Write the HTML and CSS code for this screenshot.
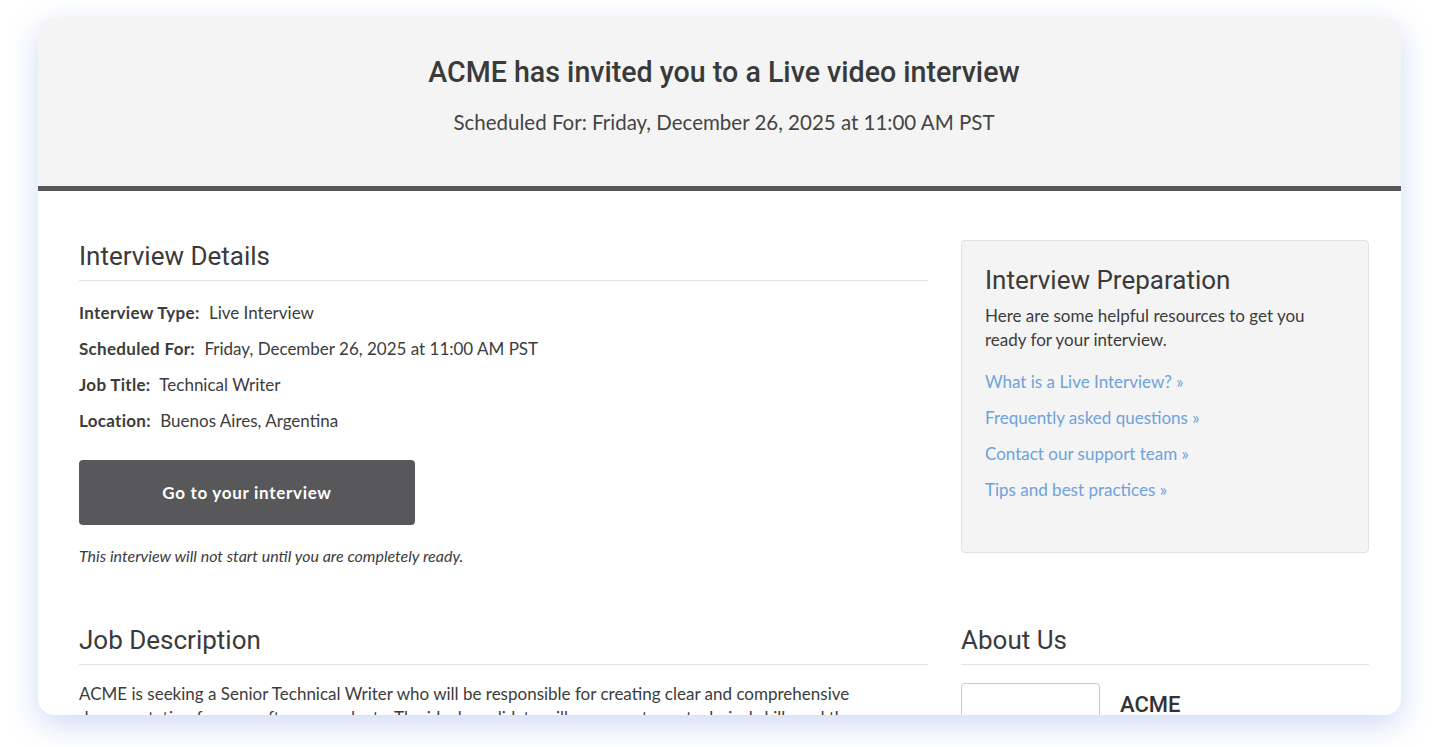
FILE: index.html
```html
<!DOCTYPE html>
<html lang="en">
<head>
    <meta charset="UTF-8">
    <meta name="viewport" content="width=device-width, initial-scale=1.0">
    <title>Interview Invitation</title>
    <link rel="stylesheet" href="styles.css">
</head>
<body>
    <div class="card">
        <!-- Invitation header -->
        <header class="invite-head">
            <h1>ACME has invited you to a Live video interview</h1>
            <p class="invite-date">Scheduled For: Friday, December 26, 2025 at 11:00 AM PST</p>
        </header>

        <div class="content">
            <!-- Interview details -->
            <section class="details">
                <h2 class="section-title">Interview Details</h2>
                <ul class="detail-list">
                    <li><b>Interview Type:</b> Live Interview</li>
                    <li><b>Scheduled For:</b> Friday, December 26, 2025 at 11:00 AM PST</li>
                    <li><b>Job Title:</b> Technical Writer</li>
                    <li><b>Location:</b> Buenos Aires, Argentina</li>
                </ul>
                <a class="go-btn" href="#">Go to your interview</a>
                <p class="note">This interview will not start until you are completely ready.</p>
            </section>

            <!-- Preparation box -->
            <aside class="prep">
                <h3>Interview Preparation</h3>
                <p>Here are some helpful resources to get you ready for your interview.</p>
                <ul class="prep-links">
                    <li><a href="#">What is a Live Interview? &raquo;</a></li>
                    <li><a href="#">Frequently asked questions &raquo;</a></li>
                    <li><a href="#">Contact our support team &raquo;</a></li>
                    <li><a href="#">Tips and best practices &raquo;</a></li>
                </ul>
            </aside>

            <!-- Job description -->
            <section class="job">
                <h2 class="section-title">Job Description</h2>
                <p>ACME is seeking a Senior Technical Writer who will be responsible for creating clear and comprehensive documentation for our software products. The ideal candidate will possess strong technical skills and the ability to explain complex ideas simply.</p>
            </section>

            <!-- Company -->
            <section class="about">
                <h2 class="section-title">About Us</h2>
                <div class="company">
                    <div class="logo-box"></div>
                    <div class="company-name">ACME</div>
                </div>
            </section>
        </div>
    </div>
</body>
</html>
```

FILE: styles.css
```css
* {
    box-sizing: border-box;
}
html, body {
    height: 100%;
}
body {
    margin: 0;
    padding: 17px 38px 32px;
    background: #fff;
    font-family: "Lato", "Liberation Sans", sans-serif;
    font-size: 17px;
    color: #3c3c3c;
}
.card {
    height: 698px;
    overflow: hidden;
    background: #fff;
    border-radius: 16px;
    box-shadow: 0 10px 30px rgba(90, 125, 220, 0.28);
}

/* header */
.invite-head {
    background: #f4f4f4;
    border-bottom: 5px solid #58585a;
    text-align: center;
    padding: 38px 32px 50px 41px;
}
.invite-head h1 {
    margin: 0;
    font-family: Roboto, sans-serif;
    font-weight: 500;
    font-size: 28.6px;
    line-height: 34px;
    color: #3a3a3a;
}
.invite-date {
    margin: 19px 0 0;
    font-size: 20.5px;
    line-height: 28px;
    color: #444;
}

/* two column body */
.content {
    display: grid;
    grid-template-columns: 849px 408px;
    column-gap: 33px;
    padding: 49px 32px 0 41px;
}
.section-title {
    margin: 0;
    padding-bottom: 8px;
    border-bottom: 1px solid #e3e3e3;
    font-family: Roboto, sans-serif;
    font-weight: 400;
    font-size: 26px;
    line-height: 32px;
    color: #3a3a3a;
}
.detail-list {
    list-style: none;
    margin: 14px 0 0;
    padding: 0;
}
.detail-list li {
    line-height: 36px;
}
.detail-list b {
    font-weight: 700;
    letter-spacing: 0.3px;
    margin-right: 5px;
}
.go-btn {
    display: flex;
    align-items: center;
    justify-content: center;
    width: 336px;
    height: 65px;
    margin-top: 21px;
    background: #58585a;
    border-radius: 4px;
    color: #fff;
    text-decoration: none;
    font-size: 17px;
    font-weight: 700;
    letter-spacing: 0.7px;
}
.note {
    margin: 21px 0 0;
    font-size: 16px;
    line-height: 20px;
    font-style: italic;
}

/* preparation box */
.prep {
    align-self: start;
    background: #f4f4f4;
    border: 1px solid #e2e2e2;
    border-radius: 4px;
    padding: 23px 23px 44px;
}
.prep h3 {
    margin: 0;
    font-family: Roboto, sans-serif;
    font-weight: 400;
    font-size: 26px;
    line-height: 32px;
    color: #3a3a3a;
}
.prep p {
    margin: 8px 0 0;
    max-width: 340px;
    line-height: 24px;
}
.prep-links {
    list-style: none;
    margin: 12px 0 0;
    padding: 0;
}
.prep-links li {
    line-height: 36px;
}
.prep-links a {
    color: #6ea2db;
    text-decoration: none;
}

/* second row */
.job, .about {
    margin-top: 58px;
}
.job p {
    margin: 17px 0 0;
    max-width: 820px;
    line-height: 24px;
}
.company {
    display: flex;
    gap: 20px;
    margin-top: 18px;
}
.logo-box {
    width: 139px;
    height: 110px;
    border: 1px solid #ccc;
    border-radius: 4px;
}
.company-name {
    margin-top: 9px;
    font-family: Roboto, sans-serif;
    font-weight: 500;
    font-size: 22px;
    color: #333;
}
```
